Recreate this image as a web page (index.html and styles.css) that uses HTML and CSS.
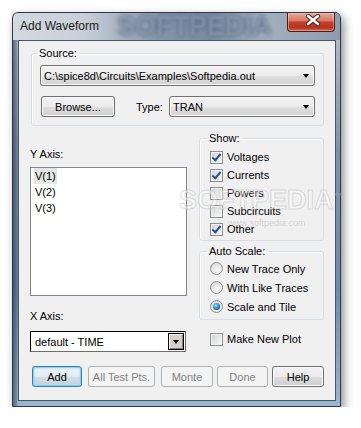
FILE: index.html
```html
<!DOCTYPE html>
<html lang="en">
<head>
  <meta charset="UTF-8">
  <title>Add Waveform</title>
  <link rel="stylesheet" href="styles.css">
</head>
<body>
  <div class="window">
    <div class="titlebar">
      <span class="title">Add Waveform</span>
      <span class="wm-title">SOFTPEDIA</span>
      <div class="close">
        <svg width="48" height="19" viewBox="0 0 48 19">
          <path d="M21 4 L31 12 M31 4 L21 12" stroke="#4a1b12" stroke-width="4.4" stroke-linecap="round"/>
          <path d="M21 4 L31 12 M31 4 L21 12" stroke="#fff" stroke-width="2.6" stroke-linecap="round"/>
        </svg>
      </div>
    </div>

    <div class="client">
      <fieldset class="group source">
        <legend>Source:</legend>
        <div class="combo">C:\spice8d\Circuits\Examples\Softpedia.out<span class="arrow"></span></div>
        <div class="source-row">
          <div class="btn browse">Browse...</div>
          <span class="type-label">Type:</span>
          <div class="combo type">TRAN<span class="arrow"></span></div>
        </div>
      </fieldset>

      <div class="middle">
        <div class="col-left">
          <div class="lbl y-lbl">Y Axis:</div>
          <ul class="list">
            <li><span class="sel">V(1)</span></li>
            <li><span>V(2)</span></li>
            <li><span>V(3)</span></li>
          </ul>
          <div class="lbl x-lbl">X Axis:</div>
          <div class="xcombo">default - TIME<span class="drop"><span class="drop-arrow"></span></span></div>
        </div>

        <div class="col-right">
          <fieldset class="group show">
            <legend>Show:</legend>
            <div class="opt"><span class="cb on"></span>Voltages</div>
            <div class="opt"><span class="cb on"></span>Currents</div>
            <div class="opt"><span class="cb"></span>Powers</div>
            <div class="opt"><span class="cb"></span>Subcircuits</div>
            <div class="opt"><span class="cb on"></span>Other</div>
          </fieldset>

          <fieldset class="group scale">
            <legend>Auto Scale:</legend>
            <div class="opt radio-opt"><span class="rb"></span>New Trace Only</div>
            <div class="opt radio-opt"><span class="rb"></span>With Like Traces</div>
            <div class="opt radio-opt"><span class="rb on"></span>Scale and Tile</div>
          </fieldset>

          <div class="opt new-plot"><span class="cb"></span>Make New Plot</div>
        </div>
      </div>

      <div class="buttons">
        <div class="btn default add">Add</div>
        <div class="btn disabled all-pts">All Test Pts.</div>
        <div class="btn disabled monte">Monte</div>
        <div class="btn disabled done">Done</div>
        <div class="btn help">Help</div>
      </div>

      <!-- watermark over the dialog -->
      <div class="wm-mid">SOFTPEDIA<sup>™</sup></div>
      <div class="wm-url">www.softpedia.com</div>
    </div>
  </div>
</body>
</html>
```

FILE: styles.css
```css
body {
  margin: 0;
  background-color: #fff;
  font-family: "Liberation Sans", Arial, sans-serif;
  font-size: 11px;
  color: #000;
}

/* Window frame */
.window {
  width: 329px;
  height: 395px;
  margin: 12px 0 0 12px;
  box-sizing: border-box;
  border: 1px solid #2c3848;
  border-radius: 6px 6px 0 0;
  background:
    linear-gradient(90deg, rgba(25, 40, 65, 0.55) 0, rgba(25, 40, 65, 0.25) 4px, transparent 5px),
    linear-gradient(180deg, #b9c3ce 0%, #7f93aa 35%, #6f8cab 70%, #9cb6d0 100%);
  box-shadow: 3px 4px 10px rgba(0, 0, 0, 0.45);
  display: flex;
  flex-direction: column;
}

.titlebar {
  flex: none;
  height: 27px;
  display: flex;
  align-items: flex-start;
  padding-left: 7px;
  position: relative;
  border-radius: 5px 5px 0 0;
  background: linear-gradient(90deg, #d3d9e0 0%, #c7cfd8 22%, #8495aa 45%, #7a8ca2 60%, #a2afbe 78%, #8d9db0 100%);
}

.title {
  font-size: 12px;
  line-height: 26px;
  color: #1a1a1a;
  position: relative;
  z-index: 1;
}

.wm-title {
  position: absolute;
  left: 104px;
  top: 0;
  font-size: 27px;
  font-weight: bold;
  line-height: 27px;
  color: rgba(150, 165, 185, 0.6);
  text-shadow: 0 0 4px rgba(60, 78, 105, 0.8);
  filter: blur(1px);
}

.close {
  margin-left: auto;
  margin-right: 5px;
  width: 48px;
  height: 19px;
  box-sizing: border-box;
  border: 1px solid #4d1c14;
  border-top: none;
  border-radius: 0 0 4px 4px;
  background: linear-gradient(180deg, #e6a696 0%, #d67c66 42%, #c2432b 50%, #b5321f 80%, #cd6448 100%);
  box-shadow: inset 0 0 0 1px rgba(255, 220, 210, 0.45);
  position: relative;
  z-index: 1;
}

.close svg {
  display: block;
  margin: -1px 0 0 -1px;
}

/* Client area */
.client {
  flex: 1;
  margin: 0 4px 5px 5px;
  border: 1px solid #4b5665;
  background-color: #f0f0f0;
  position: relative;
}

.group {
  margin: 0;
  border: 1px solid #d5dfe5;
  border-radius: 3px;
  box-shadow: inset 1px 1px 0 #fff;
  min-width: 0;
}

.group legend {
  padding: 0 2px;
  margin-left: -3px;
  line-height: 13px;
}

.source {
  margin: 6px 11px 0 12px;
  padding: 5px 8px 8px 8px;
}

.source-row {
  display: flex;
  align-items: center;
  margin-top: 10px;
}

.type-label {
  margin-left: 21px;
}

/* Vista style drop down */
.combo {
  height: 21px;
  box-sizing: border-box;
  border: 1px solid #707070;
  border-radius: 3px;
  background: linear-gradient(180deg, #f3f3f3 0%, #ececec 50%, #e0e0e0 51%, #d3d3d3 100%);
  box-shadow: inset 0 0 0 1px #fafafa;
  display: flex;
  align-items: center;
  padding-left: 3px;
}

.combo.type {
  width: 146px;
  margin-left: auto;
}

.arrow {
  margin-left: auto;
  margin-right: 5px;
  width: 0;
  height: 0;
  border-left: 3.5px solid transparent;
  border-right: 3.5px solid transparent;
  border-top: 4px solid #000;
}

/* Buttons */
.btn {
  height: 21px;
  box-sizing: border-box;
  border: 1px solid #707070;
  border-radius: 3px;
  background: linear-gradient(180deg, #f2f2f2 0%, #ebebeb 50%, #dddddd 51%, #cfcfcf 100%);
  box-shadow: inset 0 0 0 1px #fbfbfb;
  display: flex;
  align-items: center;
  justify-content: center;
}

.btn.browse {
  width: 74px;
  margin-left: 1px;
}

.btn.default {
  border-color: #3c7fb1;
  background: linear-gradient(180deg, #eef4f8 0%, #e3ebf1 50%, #d4dee5 51%, #c8d3db 100%);
  box-shadow: inset 0 0 0 1px #7fd2f8, inset 0 0 2px 2px rgba(150, 215, 245, 0.45);
}

.btn.disabled {
  border-color: #adb2b5;
  background: #f4f4f4;
  box-shadow: none;
  color: #838383;
}

.buttons {
  display: flex;
  margin: 14px 0 0 13px;
}

.add { width: 50px; }
.all-pts { width: 67px; margin-left: 6px; }
.monte { width: 52px; margin-left: 6px; }
.done { width: 51px; margin-left: 4px; }
.help { width: 52px; margin-left: 4px; }

/* Middle area */
.middle {
  display: flex;
  gap: 12px;
  margin: 0 11px 0 11px;
}

.col-left {
  width: 157px;
  flex: none;
}

.col-right {
  flex: 1;
}

.lbl {
  line-height: 13px;
}

.y-lbl {
  margin-top: 22px;
}

.list {
  list-style: none;
  margin: 6px 0 0 0;
  padding: 0 0 0 3px;
  height: 129px;
  box-sizing: border-box;
  border: 1px solid #828790;
  background-color: #fff;
}

.list li {
  line-height: 16px;
}

.list span {
  padding: 2px 1px;
}

.list .sel {
  background-color: #e6e6e6;
}

.x-lbl {
  margin-top: 14px;
}

/* Classic style drop down */
.xcombo {
  margin-top: 8px;
  width: 156px;
  height: 21px;
  box-sizing: border-box;
  border: 1px solid #000;
  border-right-color: #6d6d6d;
  border-bottom-color: #6d6d6d;
  background-color: #fff;
  display: flex;
  align-items: center;
  padding-left: 4px;
}

.drop {
  margin-left: auto;
  margin-right: 1px;
  width: 16px;
  height: 17px;
  box-sizing: border-box;
  border: 1px solid #000;
  background-color: #d4d0c8;
  box-shadow: inset 1px 1px 0 #fff, inset -1px -1px 0 #808080;
  display: flex;
  align-items: center;
  justify-content: center;
}

.drop-arrow {
  width: 0;
  height: 0;
  border-left: 3.5px solid transparent;
  border-right: 3.5px solid transparent;
  border-top: 4px solid #000;
}

/* Check boxes and radios */
.show {
  margin: 6px 0 0 0;
  padding: 3px 6px 2px 10px;
}

.scale {
  margin: 4px 0 0 0;
  padding: 1px 6px 3px 10px;
}

.opt {
  height: 18px;
  display: flex;
  align-items: center;
}

.radio-opt {
  height: 19px;
}

.new-plot {
  margin: 10px 0 0 11px;
}

.cb {
  width: 13px;
  height: 13px;
  box-sizing: border-box;
  border: 1px solid #8e8f8f;
  background: linear-gradient(135deg, #cfd1d4 0%, #e9eaeb 60%, #f7f7f7 100%);
  box-shadow: inset 0 0 0 1px #f4f4f4;
  margin-right: 4px;
  flex: none;
  position: relative;
}

.cb.on::after {
  content: "";
  position: absolute;
  left: 3px;
  top: 0px;
  width: 3px;
  height: 7px;
  border-right: 2px solid #2b4e8e;
  border-bottom: 2px solid #2b4e8e;
  transform: rotate(40deg);
}

.rb {
  width: 13px;
  height: 13px;
  box-sizing: border-box;
  border: 1px solid #8e8f8f;
  border-radius: 50%;
  background: radial-gradient(circle at 60% 65%, #f8f8f8 0%, #e3e3e3 55%, #cdcdcd 100%);
  margin-right: 4px;
  flex: none;
  display: flex;
  align-items: center;
  justify-content: center;
}

.rb.on::after {
  content: "";
  width: 7px;
  height: 7px;
  border-radius: 50%;
  background: radial-gradient(circle at 40% 35%, #a8e4fb 0%, #3ea0d8 35%, #145b95 75%, #0b3a66 100%);
}

/* Watermark */
.wm-mid {
  position: absolute;
  left: 160px;
  top: 143px;
  font-size: 27px;
  font-weight: bold;
  line-height: 24px;
  color: rgba(255, 255, 255, 0.35);
  -webkit-text-stroke: 1px rgba(170, 170, 170, 0.4);
  pointer-events: none;
}

.wm-mid sup {
  font-size: 9px;
  -webkit-text-stroke: 0;
  color: rgba(170, 170, 170, 0.5);
}

.wm-url {
  position: absolute;
  left: 209px;
  top: 177px;
  font-size: 9px;
  color: rgba(170, 170, 170, 0.45);
  pointer-events: none;
}
```
